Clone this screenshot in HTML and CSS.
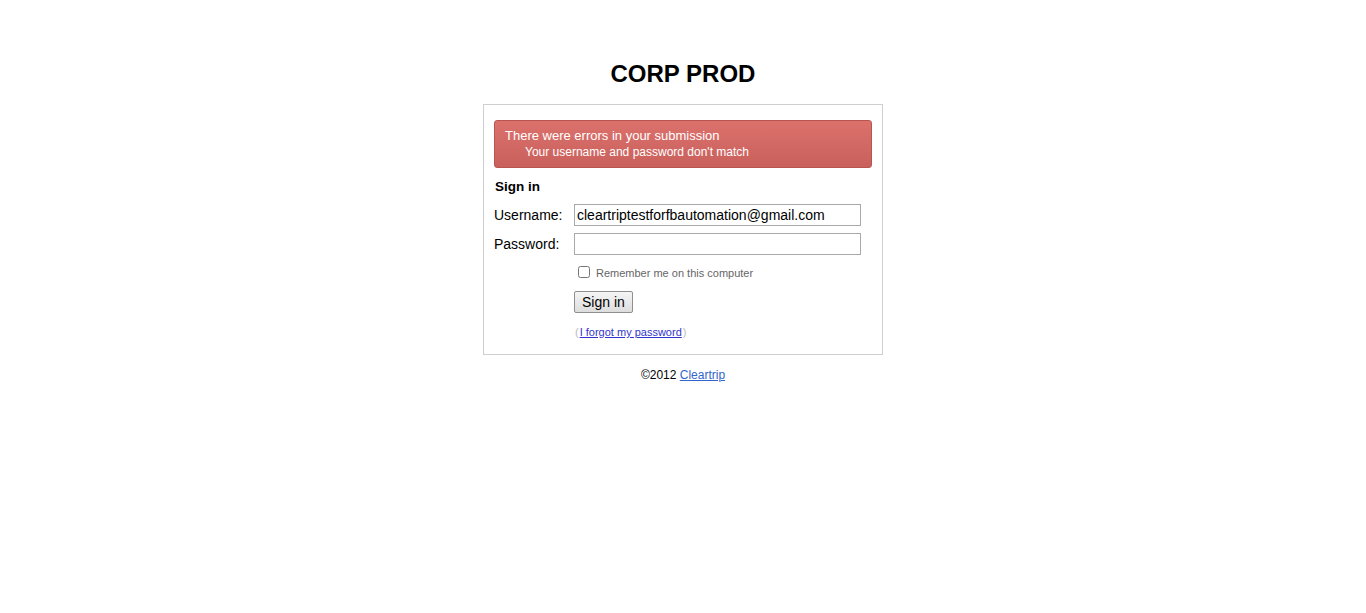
FILE: index.html
```html
<!DOCTYPE html>
<html>
<head>
<meta charset="utf-8">
<title>CORP PROD</title>
<link rel="stylesheet" href="styles.css">
</head>
<body>
<div class="page">
  <h1 class="title">CORP PROD</h1>
  <div class="box">
    <div class="error">
      <div class="error-head">There were errors in your submission</div>
      <div class="error-item">Your username and password don't match</div>
    </div>
    <h2 class="signin-title">Sign in</h2>
    <form class="form">
      <div class="row">
        <label class="label">Username:</label>
        <input class="field" type="text" value="cleartriptestforfbautomation@gmail.com">
      </div>
      <div class="row">
        <label class="label">Password:</label>
        <input class="field" type="password" value="">
      </div>
      <div class="row sub">
        <span class="label"></span>
        <label class="remember"><input type="checkbox" class="check"> Remember me on this computer</label>
      </div>
      <div class="row sub">
        <span class="label"></span>
        <button type="button" class="btn">Sign in</button>
      </div>
      <div class="row sub">
        <span class="label"></span>
        <span class="forgot"><span class="paren">(</span><a href="#">I forgot my password</a><span class="paren">)</span></span>
      </div>
    </form>
  </div>
  <div class="footer">©2012 <a href="#">Cleartrip</a></div>
</div>
</body>
</html>
```
FILE: styles.css
```css
html, body {
  margin: 0;
  padding: 0;
  background: #fff;
  font-family: "Liberation Sans", Arial, sans-serif;
  color: #000;
}
.page {
  display: flex;
  flex-direction: column;
  align-items: center;
  padding-top: 60px;
}
.title {
  margin: 0 0 17px 0;
  font-size: 24px;
  font-weight: bold;
  line-height: 27px;
}
.box {
  width: 378px;
  border: 1px solid #cfcfcf;
  padding: 15px 10px 16px 10px;
}
.error {
  background: linear-gradient(#dc716c, #c9605c);
  border: 1px solid #b85550;
  border-radius: 3px;
  color: #fff;
  font-size: 13px;
  line-height: 16px;
  padding: 7px 10px 7px 10px;
}
.error-item {
  padding-left: 20px;
  font-size: 12px;
}
.signin-title {
  margin: 11px 0 9px 1px;
  font-size: 13.5px;
  font-weight: bold;
  line-height: 16px;
}
.form {
  margin: 0;
}
.row {
  display: flex;
  align-items: center;
  margin-bottom: 7px;
}
.label {
  width: 80px;
  flex: none;
  font-size: 14px;
}
.field {
  width: 281px;
  height: 18px;
  margin: 0;
  padding: 1px 2px;
  border: 1px solid #a9a9a9;
  font-family: "Liberation Sans", Arial, sans-serif;
  font-size: 14px;
  color: #000;
}
.sub {
  margin-bottom: 0;
}
.remember {
  display: flex;
  align-items: center;
  font-size: 11px;
  color: #666;
  margin-top: 4px;
  margin-left: 4px;
}
.check {
  width: 12px;
  height: 12px;
  margin: 0 6px 2px 0;
}
.btn {
  margin-top: 11px;
  height: 22px;
  padding: 0 7px;
  font-family: "Liberation Sans", Arial, sans-serif;
  font-size: 14px;
  color: #000;
  background: linear-gradient(#f5f5f5, #dddddd);
  border: 1px solid #8f8f8f;
  border-radius: 2px;
}
.forgot {
  margin-top: 13px;
  font-size: 11px;
}
.forgot a {
  color: #3333cc;
}
.paren {
  color: #bbb;
  padding: 0 1px;
}
.footer {
  margin-top: 13px;
  font-size: 12px;
}
.footer a {
  color: #3366cc;
}
```
